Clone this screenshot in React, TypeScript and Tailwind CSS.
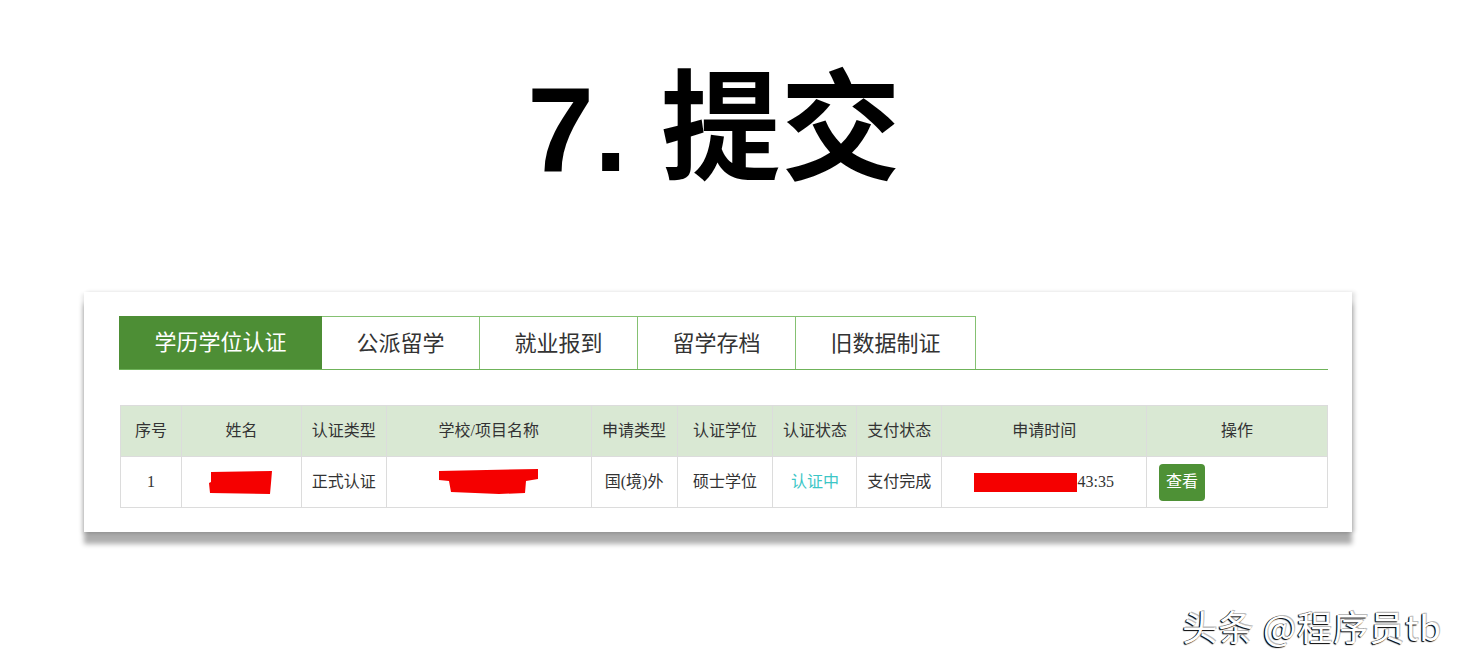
import React from 'react'

const tabs = ['学历学位认证', '公派留学', '就业报到', '留学存档', '旧数据制证']
const tabWidths = ['w-[203px]', 'w-[158px]', 'w-[158px]', 'w-[158px]', 'w-[180px]']

const cols = [
  { label: '序号', w: 'w-[61px]' },
  { label: '姓名', w: 'w-[120px]' },
  { label: '认证类型', w: 'w-[85px]' },
  { label: '学校/项目名称', w: 'w-[205px]' },
  { label: '申请类型', w: 'w-[86px]' },
  { label: '认证学位', w: 'w-[96px]' },
  { label: '认证状态', w: 'w-[84px]' },
  { label: '支付状态', w: 'w-[85px]' },
  { label: '申请时间', w: 'w-[205px]' },
  { label: '操作', w: 'w-[181px]' },
]

function NameMask() {
  return (
    <svg width="64" height="24" viewBox="0 0 64 24" className="inline-block align-middle">
      <polygon points="2,1 63,0 62,12 61,23 1,22 0,12 2,11" fill="#f50000" />
    </svg>
  )
}

function SchoolMask() {
  return (
    <svg width="100" height="26" viewBox="0 0 100 26" className="inline-block align-middle">
      <polygon points="0,2 99,0 99,10 87,12 86,24 60,25 12,23 10,12 0,11" fill="#f50000" />
    </svg>
  )
}

export default function App() {
  return (
    <div className="relative w-[1464px] h-[666px] bg-white overflow-hidden font-['Liberation_Serif','Noto_Sans_CJK_SC',serif]">
      {/* title */}
      <h1 className="pt-[60px] pr-[36px] text-center text-[120px] leading-[138px] font-bold text-black font-['Liberation_Sans','Noto_Sans_CJK_SC',sans-serif]">
        7. 提交
      </h1>

      {/* card */}
      <div className="mt-[94px] ml-[84px] w-[1268px] h-[240px] bg-white pl-[35px] pr-[24px] pt-[24px] shadow-[0_12px_5px_rgba(0,0,0,0.32),3px_0_4px_rgba(0,0,0,0.12),-2px_2px_4px_rgba(0,0,0,0.1)]">
        <div className="flex h-[54px] border-b border-[#6fb35a]">
          {tabs.map((t, i) => (
            <div
              key={t}
              className={
                i === 0
                  ? `${tabWidths[i]} flex items-center justify-center bg-[#4d8e35] text-white text-[22px]`
                  : `${tabWidths[i]} flex items-center justify-center border-t border-r border-[#85c172] text-[#333] text-[22px]`
              }
            >
              {t}
            </div>
          ))}
        </div>

        <table className="mt-[35px] ml-[1px] table-fixed border-collapse text-[16px] text-[#333]">
          <colgroup>
            {cols.map((c) => (
              <col key={c.label} className={c.w} />
            ))}
          </colgroup>
          <thead>
            <tr className="h-[51px] bg-[#d9e8d3]">
              {cols.map((c) => (
                <th key={c.label} className="border border-[#dcdcdc] font-normal text-center">
                  {c.label}
                </th>
              ))}
            </tr>
          </thead>
          <tbody>
            <tr className="h-[51px]">
              <td className="border border-[#dcdcdc] text-center">1</td>
              <td className="border border-[#dcdcdc] text-center">
                <NameMask />
              </td>
              <td className="border border-[#dcdcdc] text-center">正式认证</td>
              <td className="border border-[#dcdcdc] text-center">
                <SchoolMask />
              </td>
              <td className="border border-[#dcdcdc] text-center">国(境)外</td>
              <td className="border border-[#dcdcdc] text-center">硕士学位</td>
              <td className="border border-[#dcdcdc] text-center text-[#3cc6c6]">认证中</td>
              <td className="border border-[#dcdcdc] text-center">支付完成</td>
              <td className="border border-[#dcdcdc] text-center">
                <span className="inline-block align-middle w-[103px] h-[19px] bg-[#f50000]" />
                <span className="align-middle">43:35</span>
              </td>
              <td className="border border-[#dcdcdc] pl-[12px]">
                <button className="w-[46px] h-[37px] rounded-[4px] bg-[#4e9136] text-white text-[16px]">
                  查看
                </button>
              </td>
            </tr>
          </tbody>
        </table>
      </div>

      {/* watermark */}
      <div className="absolute right-[22px] bottom-[20px] text-[35px] tracking-[1px] leading-[40px] text-white font-['Noto_Sans_CJK_SC',sans-serif] [text-shadow:-1px_1px_1px_#000,-1px_0_0_#333,1px_-1px_0_#bbb]">
        头条 @程序员tb
      </div>
    </div>
  )
}
